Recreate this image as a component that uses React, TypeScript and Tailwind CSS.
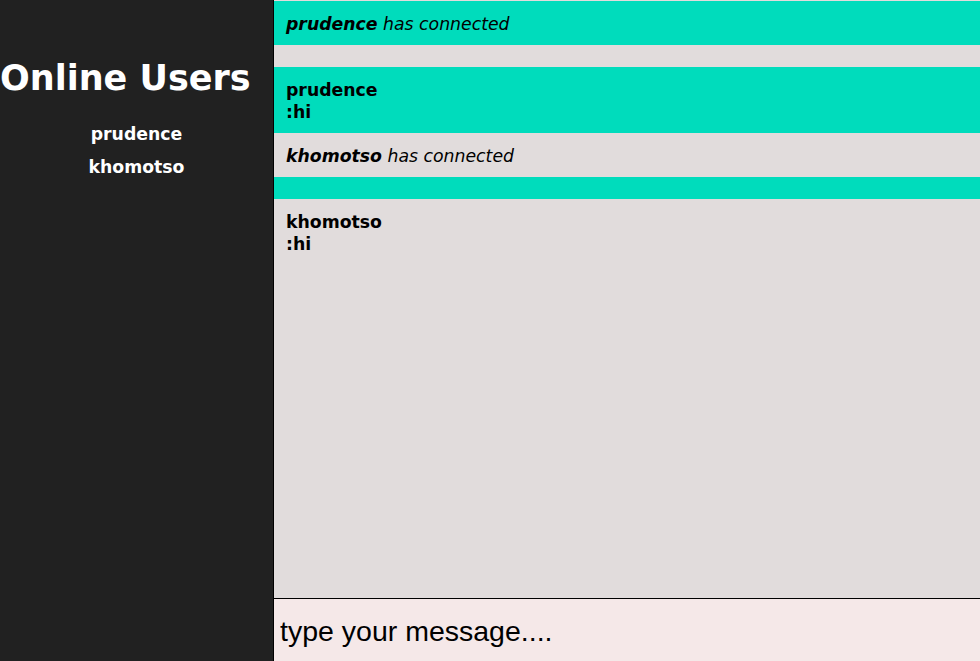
export default function App() {
  const users = ['prudence', 'khomotso'];

  const messages: { kind: 'join' | 'empty' | 'chat'; user?: string; text?: string }[] = [
    { kind: 'join', user: 'prudence' },
    { kind: 'empty' },
    { kind: 'chat', user: 'prudence', text: ':hi' },
    { kind: 'join', user: 'khomotso' },
    { kind: 'empty' },
    { kind: 'chat', user: 'khomotso', text: ':hi' },
  ];

  return (
    <div className="flex h-[661px] w-full overflow-hidden font-['DejaVu_Sans',Verdana,sans-serif]">
      <aside className="w-[274px] shrink-0 border-r border-black bg-[#212121] text-white">
        <h1 className="mt-[57px] text-[35px] font-bold leading-[42px] whitespace-nowrap">Online Users</h1>
        <ul className="mt-[19px] text-center text-[17.3px] font-bold">
          {users.map((u) => (
            <li key={u} className="leading-[33px]">
              {u}
            </li>
          ))}
        </ul>
      </aside>

      <main className="flex min-w-0 flex-1 flex-col">
        <ul className="flex-1 bg-[#e1dcdc] pt-px text-[17.3px] leading-[22px] text-black">
          {messages.map((m, i) => (
            <li
              key={i}
              className={`px-3 pt-[12px] pb-[10px] ${i % 2 === 0 ? 'bg-[#00dcbc]' : 'bg-[#e1dcdc]'}`}
            >
              {m.kind === 'join' && (
                <span className="italic">
                  <b>{m.user}</b> has connected
                </span>
              )}
              {m.kind === 'chat' && (
                <div className="font-bold">
                  <div>{m.user}</div>
                  <div>{m.text}</div>
                </div>
              )}
            </li>
          ))}
        </ul>
        <input
          type="text"
          placeholder="type your message...."
          className="h-[63px] w-full border-t border-black bg-[#f5e8e8] px-[6px] pt-[3px] font-['Liberation_Sans',Arial,sans-serif] text-[28.5px] text-black outline-none placeholder:text-black"
          autoFocus
        />
      </main>
    </div>
  );
}
